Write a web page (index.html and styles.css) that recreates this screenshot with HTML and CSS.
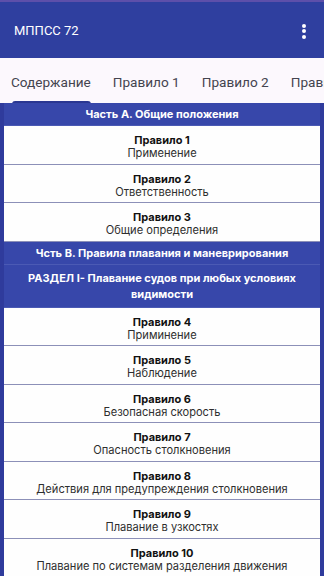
FILE: index.html
```html
<!doctype html>
<html lang="ru">
  <head>
    <meta charset="UTF-8" />
    <meta name="viewport" content="width=device-width, initial-scale=1.0" />
    <title>МППСС 72</title>
    <link rel="stylesheet" href="styles.css">
  </head>
  <body>
    <div class="status"></div>
    <header class="appbar">
      <span class="title">МППСС 72</span>
      <span class="menu"><i></i><i></i><i></i></span>
    </header>
    <nav class="tabs">
      <span class="tab active">Содержание</span>
      <span class="tab">Правило 1</span>
      <span class="tab">Правило 2</span>
      <span class="tab">Правило 3</span>
    </nav>
    <main class="contents">
      <div class="part">Часть А. Общие положения</div>
      <div class="rule"><b>Правило 1</b><span>Применение</span></div>
      <div class="rule"><b>Правило 2</b><span>Ответственность</span></div>
      <div class="rule"><b>Правило 3</b><span>Общие определения</span></div>
      <div class="part">Чсть B. Правила плавания и маневрирования</div>
      <div class="part section">РАЗДЕЛ I- Плавание судов при любых условиях видимости</div>
      <div class="rule"><b>Правило 4</b><span>Приминение</span></div>
      <div class="rule"><b>Правило 5</b><span>Наблюдение</span></div>
      <div class="rule"><b>Правило 6</b><span>Безопасная скорость</span></div>
      <div class="rule"><b>Правило 7</b><span>Опасность столкновения</span></div>
      <div class="rule"><b>Правило 8</b><span>Действия для предупреждения столкновения</span></div>
      <div class="rule"><b>Правило 9</b><span>Плавание в узкостях</span></div>
      <div class="rule"><b>Правило 10</b><span>Плавание по системам разделения движения</span></div>
    </main>
  </body>
</html>
```

FILE: styles.css
```css
body {
  margin: 0;
  font-family: Roboto, "Noto Sans", sans-serif;
  background: #fcf8fd;
  height: 576px;
  overflow: hidden;
}

.status {
  height: 2px;
  background: #5d4faa;
}

.appbar {
  height: 56px;
  background: #2f3f9f;
  color: white;
  display: flex;
  align-items: center;
  justify-content: space-between;
  padding: 0 18px 0 14px;
}

.title {
  font-size: 13px;
}

.menu {
  display: flex;
  flex-direction: column;
  gap: 1.5px;
  margin-top: 2px;
}

.menu i {
  width: 4px;
  height: 4px;
  border-radius: 50%;
  background: white;
}

.tabs {
  height: 45px;
  display: flex;
  align-items: center;
  gap: 22px;
  padding: 0 11px;
  white-space: nowrap;
  overflow: hidden;
  background: #fcf8fd;
}

.tab {
  font-size: 13.6px;
  color: #44444f;
  position: relative;
  padding-top: 2px;
}

.tab.active::after {
  content: "";
  position: absolute;
  left: 1px;
  right: 0;
  bottom: -14px;
  height: 3px;
  border-radius: 3px 3px 0 0;
  background: #2a3791;
}

.contents {
  border: 4px solid #2f3b9c;
  border-top: none;
  background: #2f3b9c;
  font-family: Inter, "Noto Sans", sans-serif;
  text-align: center;
}

.part {
  background: #3747aa;
  color: white;
  font-weight: bold;
  font-size: 11px;
  line-height: 16px;
  padding: 3px 20px;
  border-bottom: 1px solid #4b5ab4;
}

.part.section {
  padding: 5px 20px;
}

.rule {
  background: #fefefe;
  display: flex;
  flex-direction: column;
  box-sizing: border-box;
  height: 38.5px;
  padding-top: 5px;
  justify-content: center;
  border-bottom: 1px solid #8c90b8;
  color: #2e2e2e;
  font-size: 11.1px;
  line-height: 13px;
}

.rule b {
  color: #111;
  font-size: 11px;
}
```
